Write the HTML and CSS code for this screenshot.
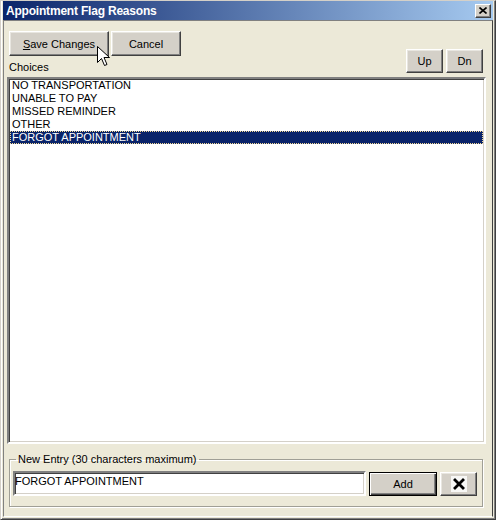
FILE: index.html
```html
<!DOCTYPE html>
<html>
<head>
<meta charset="utf-8">
<link rel="stylesheet" href="styles.css">
</head>
<body>
<div class="window">
  <div class="frame">
    <div class="titlebar">
      <span class="title">Appointment Flag Reasons</span>
      <button class="close" type="button"><svg width="8" height="7" viewBox="0 0 8 7"><path d="M0.5 0.5 L7.5 6.5 M7.5 0.5 L0.5 6.5" stroke="#000" stroke-width="1.6" fill="none"/></svg></button>
    </div>
    <div class="client">
      <div class="top">
        <div class="left">
          <div class="btnrow">
            <button class="btn save" type="button"><u>S</u>ave Changes</button>
            <button class="btn cancel" type="button">Cancel</button>
            <svg class="cursor" width="13" height="21" viewBox="0 0 13 21"><path d="M0.5 0.5 L0.5 16.5 L4.5 12.5 L7.5 19.5 L10 18.5 L7 11.5 L12.5 11.5 Z" fill="#fff" stroke="#000" stroke-width="1" stroke-linejoin="miter"/></svg>
          </div>
          <div class="label">Choices</div>
        </div>
        <div class="right">
          <button class="btn small" type="button">Up</button>
          <button class="btn small" type="button">Dn</button>
        </div>
      </div>
      <div class="listbox">
        <div class="item">NO TRANSPORTATION</div>
        <div class="item">UNABLE TO PAY</div>
        <div class="item">MISSED REMINDER</div>
        <div class="item">OTHER</div>
        <div class="item selected">FORGOT APPOINTMENT</div>
      </div>
      <fieldset class="group">
        <legend>New Entry (30 characters maximum)</legend>
        <div class="entryrow">
          <div class="input">FORGOT APPOINTMENT</div>
          <button class="btn add" type="button">Add</button>
          <button class="btn small del" type="button"><svg width="16" height="16" viewBox="0 0 16 16"><rect x="0" y="0" width="16" height="16" fill="#f7f7f5"/><path d="M4 4 L12 12 M12 4 L4 12" stroke="#000" stroke-width="2.8" stroke-linecap="square" fill="none"/></svg></button>
        </div>
      </fieldset>
    </div>
  </div>
</div>
</body>
</html>
```
FILE: styles.css
```css
* { box-sizing: border-box; }
html, body { margin: 0; padding: 0; background: #ece9d8; }
body { font-family: "Liberation Sans", Arial, sans-serif; font-size: 11px; color: #000; }

.window {
  width: 496px;
  height: 520px;
  border: 1px solid;
  border-color: #d4d0c8 #404040 #404040 #d4d0c8;
}
.frame {
  height: 100%;
  padding: 0 2px 2px 2px;
  background: #ece9d8;
  box-shadow: inset 1px 0 0 #ffffff, inset -1px -1px 0 #808080;
  display: flex;
  flex-direction: column;
}
.titlebar {
  height: 19px;
  flex: none;
  background: linear-gradient(to right, #0a246a, #a6caf0);
  display: flex;
  align-items: center;
  justify-content: space-between;
  padding: 0 2px 0 3px;
}
.title {
  color: #fff;
  font-weight: bold;
  font-size: 12px;
  letter-spacing: -0.2px;
  line-height: 17px;
  padding-top: 1px;
}
.close {
  width: 16px;
  height: 14px;
  padding: 0;
  margin: 0;
  background: #d4d0c8;
  border: 1px solid;
  border-color: #ffffff #404040 #404040 #ffffff;
  box-shadow: inset -1px -1px 0 #808080;
  display: flex;
  align-items: center;
  justify-content: center;
}
.client {
  flex: 1;
  border: 1px solid;
  border-color: #808080 #404040 #ffffff #808080;
  display: flex;
  flex-direction: column;
}
.top {
  display: flex;
  justify-content: space-between;
  align-items: flex-end;
  padding: 10px 9px 0 5px;
}
.btnrow {
  display: flex;
  gap: 2px;
  position: relative;
}
.btn {
  font-family: "Liberation Sans", Arial, sans-serif;
  font-size: 11px;
  color: #000;
  background: #d4d0c8;
  border: 1px solid;
  border-color: #ffffff #404040 #404040 #ffffff;
  box-shadow: inset -1px -1px 0 #808080, inset 1px 1px 0 #e8e6e0;
  padding: 0;
  margin: 0;
  height: 25px;
  display: flex;
  align-items: center;
  justify-content: center;
}
.save { width: 100px; }
.cancel { width: 70px; }
.cursor {
  position: absolute;
  left: 88px;
  top: 15px;
}
.label {
  line-height: 13px;
  margin-top: 5px;
}
.right {
  display: flex;
  gap: 3px;
  margin-bottom: 1px;
}
.small { width: 37px; height: 24px; }

.listbox {
  margin: 3px 6px 0 3px;
  height: 367px;
  flex: none;
  background: #fff;
  border: 2px solid;
  border-color: #808080 #ffffff #ffffff #808080;
  box-shadow: inset 1px 1px 0 #404040, inset -1px -1px 0 #d4d0c8;
  padding: 0;
}
.item {
  line-height: 13px;
  height: 13px;
  padding-left: 2px;
  margin: 0 1px;
  white-space: nowrap;
}
.item.selected {
  background: #0a246a;
  color: #fff;
  outline: 1px dotted #f5db95;
  outline-offset: -1px;
}

.group {
  margin: 9px 9px 0 5px;
  padding: 5px 5px 10px 3px;
  border: 1px solid #a09f96;
  box-shadow: inset 1px 1px 0 #fff, 1px 1px 0 #fff;
  min-width: 0;
}
.group legend {
  padding: 0 2px;
  margin-left: 3px;
  line-height: 13px;
}
.entryrow {
  display: flex;
  align-items: center;
  gap: 3px;
}
.input {
  flex: 1;
  height: 25px;
  background: #fff;
  border: 2px solid;
  border-color: #808080 #ffffff #ffffff #808080;
  box-shadow: inset 1px 1px 0 #404040, inset -1px -1px 0 #d4d0c8;
  padding: 1px 0 0 0;
  line-height: 14px;
  white-space: nowrap;
}
.add {
  width: 68px;
  height: 24px;
  margin-top: 1px;
  border: 1px solid #000;
  box-shadow: inset 1px 1px 0 #ffffff, inset -1px -1px 0 #404040, inset -2px -2px 0 #808080;
}
.del { margin-top: 1px; }
```
